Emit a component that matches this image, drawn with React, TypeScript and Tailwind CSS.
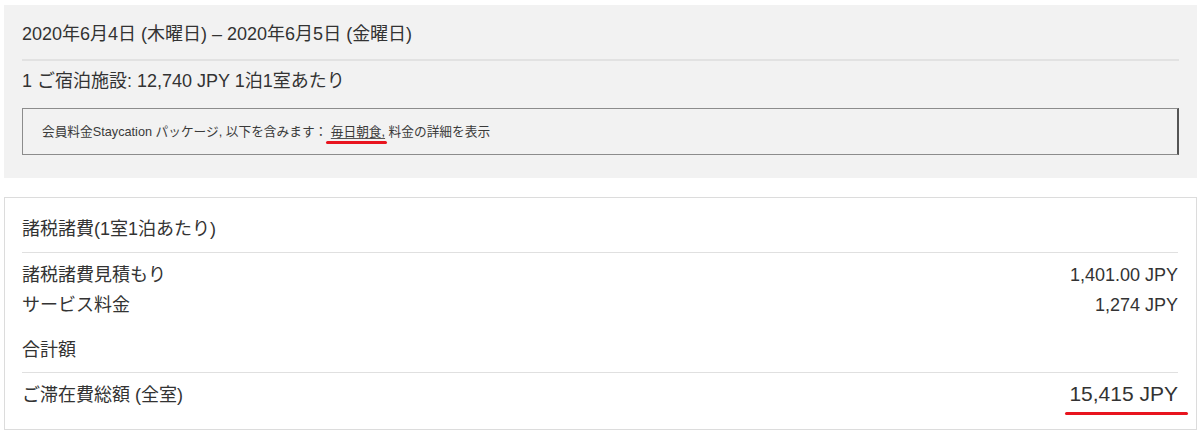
import React from 'react'

const rows = [
  { label: '諸税諸費見積もり', value: '1,401.00 JPY' },
  { label: 'サービス料金', value: '1,274 JPY' },
]

function App() {
  return (
    <div className="w-[1200px] h-[434px] bg-white pl-[4px] pr-[3px] pt-[5px] text-[#333] font-['Liberation_Sans','Noto_Sans_CJK_JP',sans-serif]">
      {/* stay summary */}
      <section className="bg-[#f2f2f2] px-[18px] pt-[17px] pb-[23px]">
        <div className="text-[18px] leading-[24px] pb-[13px] border-b-2 border-[#e2e2e2]">
          2020年6月4日 (木曜日) – 2020年6月5日 (金曜日)
        </div>
        <div className="mt-[8px] text-[18px] leading-[24px]">
          1 ご宿泊施設: 12,740 JPY 1泊1室あたり
        </div>
        <div className="mt-[15px] border border-[#8c8c8c] border-r-2 border-r-[#555] pl-[19px] pt-[14px] pb-[13px] text-[12.7px] leading-[18px] text-[#3a3a3a]">
          会員料金Staycation パッケージ, 以下を含みます：{' '}
          <span className="relative underline underline-offset-2 decoration-[#555]">
            毎日朝食,
            <span className="absolute left-[-5px] right-[-2px] top-[calc(100%+2px)] h-[3px] rounded-full bg-[#e8141e]"></span>
          </span>{' '}
          料金の詳細を表示
        </div>
      </section>

      {/* price breakdown */}
      <section className="mt-[19px] border border-[#dcdcdc] pl-[17px] pr-[18px] pt-[19px] pb-[14px] text-[18px] leading-[24px]">
        <div className="pb-[11px] border-b border-[#e0e0e0]">諸税諸費(1室1泊あたり)</div>
        <div className="pt-[10px] flex flex-col gap-[6px]">
          {rows.map((r) => (
            <div key={r.label} className="flex justify-between">
              <span>{r.label}</span>
              <span>{r.value}</span>
            </div>
          ))}
        </div>
        <div className="mt-[21px] pb-[10px] border-b border-[#e0e0e0]">合計額</div>
        <div className="pt-[8px] flex justify-between items-baseline">
          <span>ご滞在費総額 (全室)</span>
          <div className="flex flex-col items-end">
            <span className="text-[21px] leading-[26px]">15,415 JPY</span>
            <div className="mt-[5px] -mr-[10px] w-[123px] h-[3px] rounded-full bg-[#e8141e]"></div>
          </div>
        </div>
      </section>
    </div>
  )
}

export default App
